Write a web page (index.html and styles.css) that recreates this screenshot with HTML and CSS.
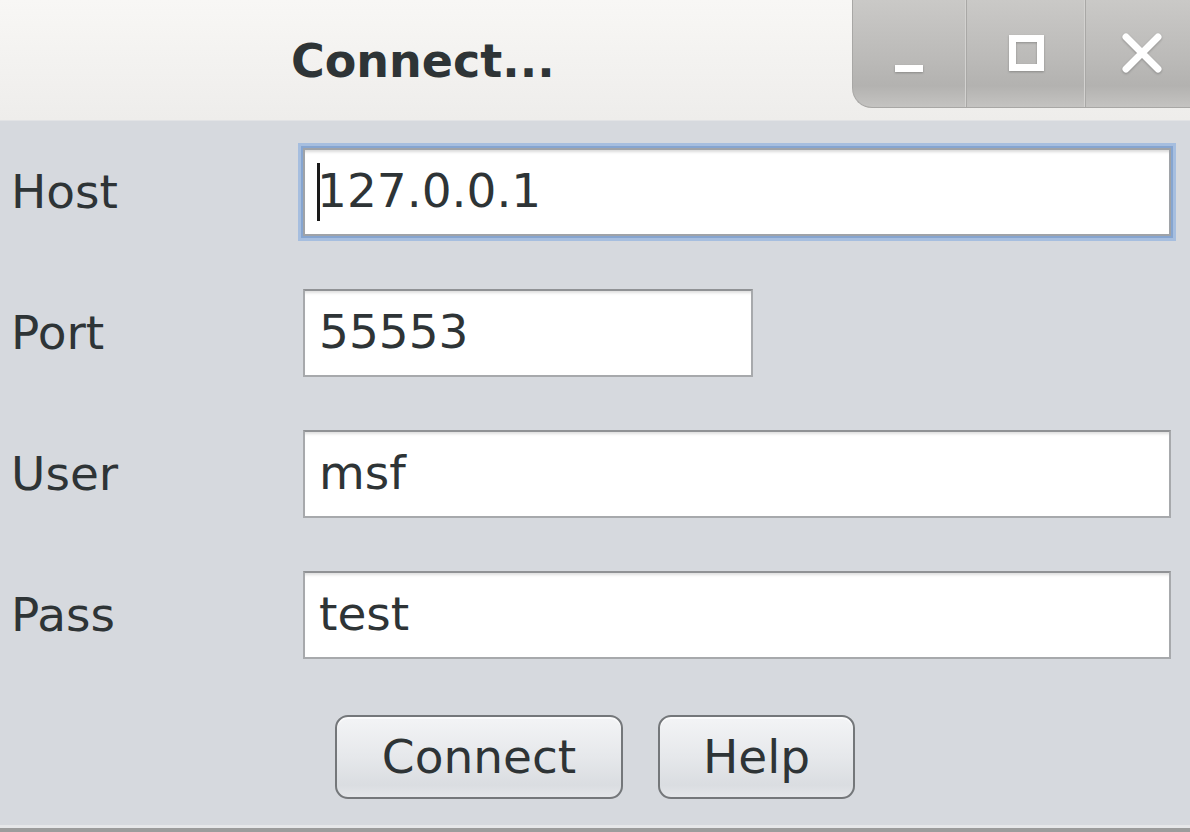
FILE: index.html
```html
<!DOCTYPE html>
<html>
<head>
<meta charset="utf-8">
<link rel="stylesheet" href="styles.css">
</head>
<body>
<div class="window">
  <div class="titlebar">
    <div class="title">Connect...</div>
    <div class="controls">
      <div class="ctl ctl-min">
        <svg width="40" height="40" viewBox="0 0 40 40"><rect x="6" y="17" width="28" height="7" fill="#fff"/></svg>
      </div>
      <div class="ctl ctl-max">
        <svg width="40" height="40" viewBox="0 0 40 40"><rect x="6.5" y="5.5" width="28" height="29" fill="none" stroke="#fff" stroke-width="7"/></svg>
      </div>
      <div class="ctl ctl-close">
        <svg width="44" height="44" viewBox="0 0 44 44"><path d="M6 6 L38 38 M38 6 L6 38" stroke="#fff" stroke-width="7" stroke-linecap="round"/></svg>
      </div>
    </div>
  </div>
  <div class="content">
    <div class="form">
      <div class="label">Host</div>
      <div class="field focused"><span class="caret"></span>127.0.0.1</div>
      <div class="label">Port</div>
      <div class="field short">55553</div>
      <div class="label">User</div>
      <div class="field">msf</div>
      <div class="label">Pass</div>
      <div class="field">test</div>
    </div>
    <div class="buttons">
      <div class="btn btn-connect">Connect</div>
      <div class="btn btn-help">Help</div>
    </div>
  </div>
  <div class="bottom-edge"></div>
</div>
</body>
</html>
```

FILE: styles.css
```css
html, body {
  margin: 0;
  padding: 0;
}
body {
  width: 1190px;
  height: 832px;
  overflow: hidden;
  font-family: "DejaVu Sans", "Liberation Sans", sans-serif;
  color: #2e3436;
  background: #d6d9de;
}
.window {
  display: flex;
  flex-direction: column;
  height: 832px;
}
.titlebar {
  height: 121px;
  display: flex;
  align-items: flex-start;
  background: linear-gradient(#f8f7f5, #eeedeb);
  border-bottom: 1px solid #e2e3e5;
  box-sizing: border-box;
}
.title {
  flex: 1;
  padding-left: 291px;
  padding-top: 33px;
  font-weight: bold;
  font-size: 46px;
  line-height: 56px;
  color: #2e3436;
}
.controls {
  width: 338px;
  height: 108px;
  display: flex;
  box-sizing: border-box;
  border-left: 1px solid #a8a7a5;
  border-bottom: 1px solid #a8a7a5;
  border-bottom-left-radius: 20px;
  background: linear-gradient(#cac9c7 0%, #bbbab8 55%, #b3b2b0 80%, #c4c3c1 100%);
  overflow: hidden;
}
.ctl {
  display: flex;
  align-items: center;
  justify-content: center;
  border-right: 1px solid #a9a8a6;
  box-shadow: inset -1px 0 0 #d3d2d0;
}
.ctl svg {
  filter: drop-shadow(0 1px 1px rgba(0,0,0,0.25));
}
.ctl-min { width: 114px; padding-top: 28px; box-sizing: border-box; }
.ctl-max { width: 120px; padding-bottom: 2px; box-sizing: border-box; }
.ctl-close { width: 104px; border-right: none; box-shadow: none; padding-bottom: 2px; padding-left: 8px; box-sizing: border-box; }

.content {
  flex: 1;
  display: flex;
  flex-direction: column;
  padding: 27px 19px 0 10px;
}
.form {
  display: grid;
  grid-template-columns: 293px 1fr;
  row-gap: 53px;
  align-items: center;
}
.label {
  font-size: 47px;
  line-height: 88px;
  padding-left: 1px;
  color: #2e3436;
}
.field {
  height: 88px;
  box-sizing: border-box;
  background: #fff;
  border: 2px solid #a7a9ac;
  border-top-color: #909295;
  box-shadow: inset 0 4px 3px -2px rgba(0,0,0,0.13);
  font-size: 47px;
  line-height: 82px;
  padding-left: 14px;
  color: #2e3436;
  white-space: nowrap;
}
.field.short {
  width: 450px;
}
.field.focused {
  border-color: #9fa3a8;
  box-shadow: inset 0 4px 3px -2px rgba(0,0,0,0.15), 0 0 0 2px #86a5d0, 0 0 0 5px #a6bedf;
  padding-left: 12px;
}
.caret {
  display: inline-block;
  width: 3px;
  height: 58px;
  background: #1a1a1a;
  vertical-align: middle;
  margin-right: -3px;
  position: relative;
  top: -3px;
}
.buttons {
  display: flex;
  justify-content: center;
  gap: 35px;
  margin-top: 56px;
  padding-left: 9px;
}
.btn {
  height: 84px;
  box-sizing: border-box;
  border: 2.5px solid #74777a;
  border-radius: 13px;
  background: linear-gradient(#f3f4f6 0%, #e6e8eb 50%, #dadde1 85%, #e4e6e9 100%);
  box-shadow: inset 0 2px 0 #fbfbfc;
  font-size: 47px;
  line-height: 79px;
  color: #2e3436;
  text-align: center;
}
.btn-connect { width: 288px; }
.btn-help { width: 197px; }
.bottom-edge {
  height: 7px;
  background: linear-gradient(#e6e7e9 0 3px, #9c9c9c 3px 7px);
}
```
